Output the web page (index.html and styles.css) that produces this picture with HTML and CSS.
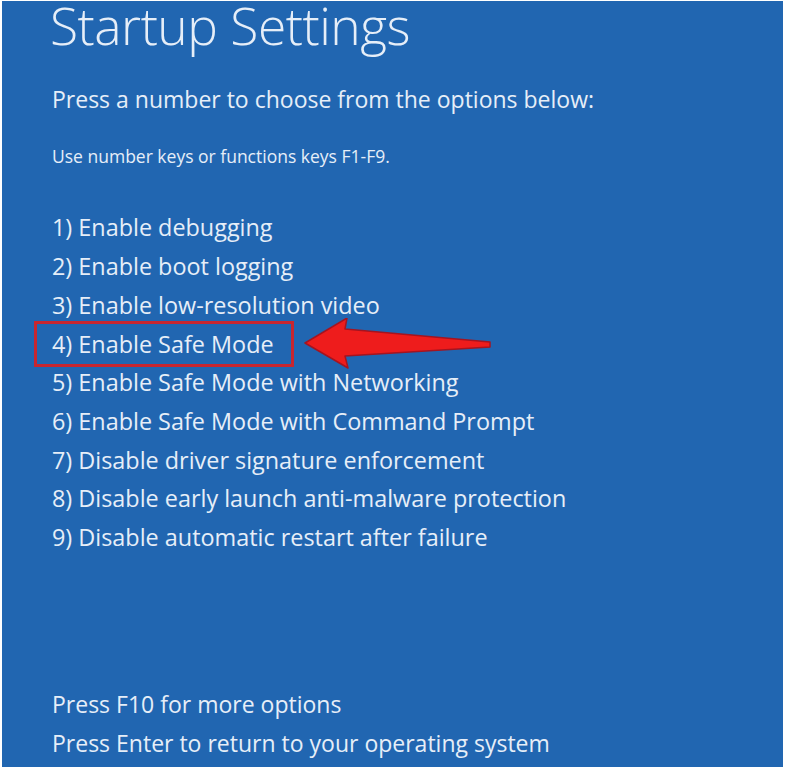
FILE: index.html
```html
<!DOCTYPE html>
<html lang="en">
<head>
  <meta charset="UTF-8" />
  <title>Startup Settings</title>
  <link rel="stylesheet" href="styles.css">
</head>
<body>
  <!-- Blue boot screen -->
  <div class="screen">
    <h1 class="title">Startup Settings</h1>
    <p class="lead">Press a number to choose from the options below:</p>
    <p class="hint">Use number keys or functions keys F1-F9.</p>

    <!-- Options -->
    <ul class="options">
      <li>1) Enable debugging</li>
      <li>2) Enable boot logging</li>
      <li>3) Enable low-resolution video</li>
      <li><span class="marked">4) Enable Safe Mode</span></li>
      <li>5) Enable Safe Mode with Networking</li>
      <li>6) Enable Safe Mode with Command Prompt</li>
      <li>7) Disable driver signature enforcement</li>
      <li>8) Disable early launch anti-malware protection</li>
      <li>9) Disable automatic restart after failure</li>
    </ul>

    <!-- Footer -->
    <div class="footer">
      <p>Press F10 for more options</p>
      <p>Press Enter to return to your operating system</p>
    </div>

    <!-- Red arrow pointing at option 4 -->
    <svg class="arrow" width="200" height="60" viewBox="0 0 200 60">
      <path d="M3 25 L45 0 L43 11 L188 24 L188 29 L43 38 L46 50 Z" fill="#ee1c1c" stroke="#a51420" stroke-width="1.5" stroke-linejoin="round" />
    </svg>
  </div>
</body>
</html>
```

FILE: styles.css
```css
/* Basic reset */
* {
  margin: 0;
  padding: 0;
  box-sizing: border-box;
}

body {
  background: #ffffff;
  padding: 1px 2px 0 2px;
  font-family: 'Open Sans', 'Noto Sans', sans-serif;
  color: #e6eef8;
}

.screen {
  position: relative;
  height: 766px;
  background: #2166b1;
  padding-left: 48px;
  display: flex;
  flex-direction: column;
}

.title {
  font-weight: 300;
  font-size: 51.5px;
  line-height: 46px;
  margin-top: 1px;
  letter-spacing: -0.5px;
}

.lead {
  font-size: 23px;
  line-height: 32px;
  margin-top: 35px;
  margin-left: 2px;
}

.hint {
  font-size: 17.5px;
  line-height: 24px;
  margin-top: 29px;
  margin-left: 2px;
}

.options {
  list-style: none;
  margin-top: 40px;
  margin-left: 2px;
}

.options li {
  display: flex;
  align-items: center;
  font-size: 23.4px;
  line-height: 38.75px;
  height: 38.75px;
}

/* Highlighted option */
.marked {
  border: 3px solid #c8262f;
  margin-left: -18px;
  padding: 0 17px 0 15px;
  line-height: 40px;
}

.footer {
  margin-top: auto;
  margin-bottom: 4px;
  margin-left: 2px;
}

.footer p {
  font-size: 23px;
  line-height: 39px;
}

.arrow {
  position: absolute;
  left: 300px;
  top: 317px;
}
```
